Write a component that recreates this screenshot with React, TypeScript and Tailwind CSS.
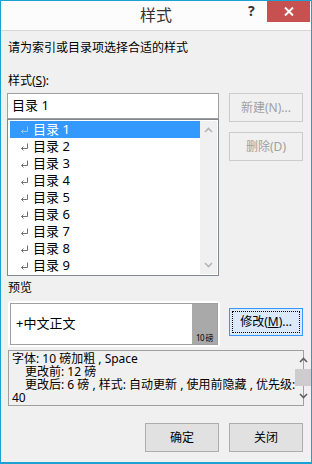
import React from "react";

const font = { fontFamily: '"Noto Sans", "Noto Sans CJK SC", sans-serif' };

function Ret({ light }: { light?: boolean }) {
  const c = light ? "#9fc6ee" : "#707070";
  return (
    <svg width="9" height="8" viewBox="0 0 9 8" className="shrink-0">
      <path d="M7.5 0.5 V5.5 H1.5" stroke={c} strokeWidth="1" fill="none" />
      <path d="M3.5 3.5 L1.5 5.5 L3.5 7.5" stroke={c} strokeWidth="1" fill="none" />
    </svg>
  );
}

function Chev({ up, color }: { up?: boolean; color: string }) {
  return (
    <svg width="9" height="6" viewBox="0 0 9 6">
      <path
        d={up ? "M1 5 L4.5 1.5 L8 5" : "M1 1 L4.5 4.5 L8 1"}
        stroke={color}
        strokeWidth="1.6"
        fill="none"
      />
    </svg>
  );
}

function Btn({
  children,
  disabled,
  className = "",
}: {
  children: React.ReactNode;
  disabled?: boolean;
  className?: string;
}) {
  return (
    <div
      className={`w-[74px] h-[29px] flex items-center justify-center border text-[12px] leading-none ${
        disabled
          ? "border-[#cccccc] bg-[#f0f0f0] text-[#a0a0a0]"
          : "border-[#adadad] bg-[#e1e1e1] text-[#000]"
      } ${className}`}
    >
      {children}
    </div>
  );
}

export default function App() {
  const rows = ["目录 1", "目录 2", "目录 3", "目录 4", "目录 5", "目录 6", "目录 7", "目录 8", "目录 9"];
  return (
    <div
      style={font}
      className="w-[312px] h-[464px] bg-[#f0f0f0] border border-[#1ba1d2] border-b-2 flex flex-col text-[12px] text-black overflow-hidden"
    >
      {/* title bar */}
      <div className="relative h-[30px] shrink-0 bg-[#fcfcfc] border-b border-[#d6d6d6] flex items-center justify-center">
        <span className="text-[16px] text-[#333] leading-none mt-[-2px]">样式</span>
        <span className="absolute left-[247px] top-[3px] text-[14px] font-bold text-[#333] leading-none">?</span>
        <div className="absolute right-[1px] top-0 w-[43px] h-[21px] bg-[#c75050] flex items-center justify-center">
          <svg width="10" height="9" viewBox="0 0 10 9">
            <path d="M1 0.5 L9 8.5 M9 0.5 L1 8.5" stroke="#fff" strokeWidth="2" />
          </svg>
        </div>
      </div>

      <div className="flex flex-col pl-[6px]">
        <div className="h-[16px] mt-[9px] leading-[16px] pl-[1px]">请为索引或目录项选择合适的样式</div>
        <div className="h-[14px] mt-[18px] leading-[14px] pl-[1px]">
          样式(<span className="underline">S</span>):
        </div>

        <div className="flex mt-[5px]">
          {/* left column */}
          <div className="w-[212px] flex flex-col">
            <div className="h-[26px] bg-white border border-[#a0a0a0] flex items-center pl-[4px] text-[13px]">
              目录 1
            </div>
            <div className="h-[157px] bg-white border border-[#828790] p-[1px] flex">
              <div className="flex-1 flex flex-col pl-[1px]">
                {rows.map((r, i) => (
                  <div
                    key={r}
                    className={`h-[17px] flex items-center gap-[4px] pl-[10px] text-[13px] ${
                      i === 0 ? "bg-[#3399ff] text-white" : ""
                    }`}
                  >
                    <Ret light={i === 0} />
                    <span className="leading-none">{r}</span>
                  </div>
                ))}
              </div>
              <div className="w-[17px] bg-[#f0f0f0] flex flex-col items-center justify-between py-[6px]">
                <Chev up color="#b5b5b5" />
                <Chev color="#b5b5b5" />
              </div>
            </div>
          </div>
          {/* right column */}
          <div className="ml-[10px] flex flex-col gap-[10px]">
            <Btn disabled>新建(N)...</Btn>
            <Btn disabled>删除(D)</Btn>
          </div>
        </div>

        <div className="h-[14px] mt-[5px] leading-[14px] pl-[1px]">预览</div>

        <div className="flex mt-[6px] items-start">
          <div className="ml-[1px] w-[212px] h-[46px] bg-white p-[2px]">
            <div className="h-full border border-[#a0a0a0] flex">
              <div className="flex-1 flex items-center pl-[5px] text-[13px]">+中文正文</div>
              <div className="w-[25px] bg-[#a9a9a9] flex items-end justify-center pb-[2px]">
                <span className="text-[8px] leading-none tracking-[-0.5px] text-black">10 磅</span>
              </div>
            </div>
          </div>
          <div className="ml-[9px] mt-[7px] w-[74px] h-[28px] border border-[#3399ff] bg-[#dbe9f9] p-[2px]">
            <div className="h-full border border-dotted border-black flex items-center justify-center">
              修改(<span className="underline">M</span>)...
            </div>
          </div>
        </div>

        <div className="mt-[3px] ml-[1px] w-[296px] h-[56px] border border-[#a0a0a0] bg-[#f0f0f0] flex">
          <div className="flex-1 pl-[3px] pt-[1px] text-[12px]">
            <div className="h-[13px] leading-[13px] overflow-visible">字体: 10 磅加粗 , Space</div>
            <div className="h-[13px] leading-[13px] pl-[13px]">更改前: 12 磅</div>
            <div className="h-[13px] leading-[13px] pl-[13px] whitespace-nowrap">更改后: 6 磅 , 样式: 自动更新 , 使用前隐藏 , 优先级:</div>
            <div className="h-[13px] leading-[13px]">40</div>
          </div>
          <div className="w-[17px] flex flex-col items-center">
            <div className="h-[18px] flex items-center justify-center">
              <Chev up color="#606060" />
            </div>
            <div className="w-[16px] h-[17px] bg-[#cdcdcd]" />
            <div className="flex-1 flex items-center justify-center">
              <Chev color="#606060" />
            </div>
          </div>
        </div>

        <div className="flex mt-[17px] ml-[138px] gap-[10px]">
          <Btn>确定</Btn>
          <Btn>关闭</Btn>
        </div>
      </div>
    </div>
  );
}
